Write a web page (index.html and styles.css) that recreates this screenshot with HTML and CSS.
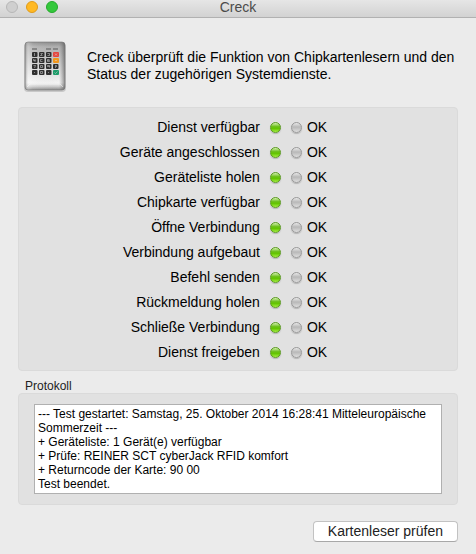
FILE: index.html
```html
<!DOCTYPE html>
<html lang="de">
<head>
    <meta charset="UTF-8">
    <meta name="viewport" content="width=device-width, initial-scale=1.0">
    <title>Creck</title>
    <link rel="stylesheet" href="styles.css">
</head>
<body>
    <header class="titlebar">
        <div class="lights">
            <span class="light"></span>
            <span class="light yellow"></span>
            <span class="light green"></span>
        </div>
        <h1 class="title">Creck</h1>
    </header>

    <main>
        <div class="intro">
            <svg class="reader" viewBox="0 0 46 52" width="46" height="52">
                <defs>
                    <linearGradient id="metal" x1="0" y1="0" x2="0" y2="1">
                        <stop offset="0" stop-color="#8c8c8c"/>
                        <stop offset="0.1" stop-color="#b0b0b0"/>
                        <stop offset="0.5" stop-color="#d6d6d6"/>
                        <stop offset="0.85" stop-color="#f4f4f4"/>
                        <stop offset="0.92" stop-color="#d4d4d4"/>
                        <stop offset="1" stop-color="#8a8a8a"/>
                    </linearGradient>
                    <linearGradient id="side" x1="0" y1="0" x2="1" y2="0">
                        <stop offset="0" stop-color="#777" stop-opacity="0.6"/>
                        <stop offset="0.08" stop-color="#fff" stop-opacity="0.3"/>
                        <stop offset="0.2" stop-color="#fff" stop-opacity="0.1"/>
                        <stop offset="0.85" stop-color="#777" stop-opacity="0"/>
                        <stop offset="1" stop-color="#444" stop-opacity="0.6"/>
                    </linearGradient>
                </defs>
                <rect x="2" y="3" width="42" height="49" rx="4" fill="#000" opacity="0.15"/>
                <rect x="3" y="2" width="40" height="48" rx="3" fill="url(#metal)"/>
                <rect x="3" y="2" width="40" height="48" rx="3" fill="url(#side)" stroke="#777" stroke-width="0.6"/>
                <path d="M5 47l3-3h30l3 3" fill="none" stroke="#fff" stroke-width="0.8" opacity="0.6"/>
                <!-- slot labels -->
                <path d="M10 9h5M24 9h5M31 9h5" stroke="#777" stroke-width="1.5"/>
                <!-- keys -->
                <g fill="#303030">
                    <rect x="10" y="12" width="5.500" height="5" rx="1"/>
                    <rect x="17" y="12" width="5.500" height="5" rx="1"/>
                    <rect x="24" y="12" width="5.500" height="5" rx="1"/>
                    <rect x="31" y="12" width="6" height="5" rx="1" fill="#e4453e"/>
                    <rect x="10" y="18" width="5.500" height="5" rx="1"/>
                    <rect x="17" y="18" width="5.500" height="5" rx="1"/>
                    <rect x="24" y="18" width="5.500" height="5" rx="1"/>
                    <rect x="31" y="18" width="6" height="5" rx="1" fill="#f2971e"/>
                    <rect x="10" y="24" width="5.500" height="5" rx="1"/>
                    <rect x="17" y="24" width="5.500" height="5" rx="1"/>
                    <rect x="24" y="24" width="5.500" height="5" rx="1"/>
                    <rect x="31" y="24" width="5.500" height="5" rx="1"/>
                    <rect x="10" y="30" width="5.500" height="5" rx="1"/>
                    <rect x="17" y="30" width="5.500" height="5" rx="1"/>
                    <rect x="24" y="30" width="5.500" height="5" rx="1"/>
                    <rect x="31" y="30" width="6" height="5" rx="1" fill="#1f9d6b"/>
                </g>
                <g fill="none" stroke="#ddd" stroke-width="0.5" transform="translate(0 1)">
                    <path d="M12.500 12v3M18.500 12.500h2l-2 2h2M25.500 12.500h2v2h-2M33 12.500l2 2m0-2l-2 2"/>
                    <path d="M11.500 18v1.500h2M13 18v3M20.500 18.500h-2v2h2M27.500 18.500h-2v2h2v-1h-2M33 19.500h2"/>
                    <path d="M11.500 24.500h2l-1 2.500M18.500 24.500h2v2h-2zM27.500 26.500v-2h-2v1h2M33 24.500h1.500v1h-1v1.500"/>
                    <path d="M12 31.500h1M18.500 30.500h2v2h-2zM26 31.500h1M32.500 31.500l1 1 2-2"/>
                </g>
            </svg>
            <p>Creck überprüft die Funktion von Chipkartenlesern und den Status der zugehörigen Systemdienste.</p>
        </div>

        <ul class="panel checks">
            <li><span class="name">Dienst verfügbar</span><i class="led on"></i><i class="led"></i><span>OK</span></li>
            <li><span class="name">Geräte angeschlossen</span><i class="led on"></i><i class="led"></i><span>OK</span></li>
            <li><span class="name">Geräteliste holen</span><i class="led on"></i><i class="led"></i><span>OK</span></li>
            <li><span class="name">Chipkarte verfügbar</span><i class="led on"></i><i class="led"></i><span>OK</span></li>
            <li><span class="name">Öffne Verbindung</span><i class="led on"></i><i class="led"></i><span>OK</span></li>
            <li><span class="name">Verbindung aufgebaut</span><i class="led on"></i><i class="led"></i><span>OK</span></li>
            <li><span class="name">Befehl senden</span><i class="led on"></i><i class="led"></i><span>OK</span></li>
            <li><span class="name">Rückmeldung holen</span><i class="led on"></i><i class="led"></i><span>OK</span></li>
            <li><span class="name">Schließe Verbindung</span><i class="led on"></i><i class="led"></i><span>OK</span></li>
            <li><span class="name">Dienst freigeben</span><i class="led on"></i><i class="led"></i><span>OK</span></li>
        </ul>

        <label class="log-label" for="log">Protokoll</label>
        <div class="panel log-panel">
            <textarea id="log" class="log" rows="6" readonly>--- Test gestartet: Samstag, 25. Oktober 2014 16:28:41 Mitteleuropäische Sommerzeit ---
+ Geräteliste: 1 Gerät(e) verfügbar
+ Prüfe: REINER SCT cyberJack RFID komfort
+ Returncode der Karte: 90 00
Test beendet.</textarea>
        </div>

        <div class="actions">
            <button class="check-btn" type="button">Kartenleser prüfen</button>
        </div>
    </main>
</body>
</html>
```

FILE: styles.css
```css
*{
    margin: 0;
    padding: 0;
    box-sizing: border-box;
}
body{
    background-color: #ebebeb;
    color: #000;
    font-family: "Liberation Sans", Arial, sans-serif;
    font-size: 14px;
    line-height: 17px;
}
.titlebar{
    display: grid;
    grid-template-columns: 1fr auto 1fr;
    height: 18px;
    background: linear-gradient(#e6e6e6, #d2d2d2);
    border-bottom: 1px solid #b1b1b1;
}
.lights{
    display: flex;
    gap: 8px;
    padding: 1px 0 0 6px;
}
.light{
    width: 12px;
    height: 12px;
    border-radius: 50%;
    background-color: #cfcfcf;
    border: 1px solid #b7b7b7;
}
.light.yellow{
    background-color: #ffb924;
    border-color: #e09b1a;
}
.light.green{
    background-color: #34c83c;
    border-color: #25a92c;
}
.title{
    font-size: 14px;
    font-weight: normal;
    line-height: 15px;
    color: #4b4b4b;
}
main{
    padding: 22px 18px 12px;
}
.intro{
    display: flex;
    align-items: flex-start;
    gap: 19px;
    padding-left: 4px;
}
.reader{
    flex: none;
}
.intro p{
    padding-top: 9px;
}
.panel{
    background-color: #e1e1e1;
    border: 1px solid #dadada;
    border-radius: 4px;
}
.checks{
    list-style: none;
    margin-top: 15px;
    padding: 7px 0 5px;
}
.checks li{
    display: grid;
    grid-template-columns: 55% 11px 11px auto;
    column-gap: 10px;
    align-items: center;
    justify-content: start;
    height: 25px;
}
.name{
    text-align: right;
}
.led{
    width: 11px;
    height: 11px;
    border-radius: 50%;
    border: 1px solid #999;
    background: linear-gradient(#e8e8e8, #b8b8b8 45%, #dedede);
    box-shadow: 0 1px 1px #b4b4b4;
}
.led + span{
    margin-left: -5px;
}
.led.on{
    border-color: #5a9a1e;
    background: linear-gradient(#d4f0b0, #6cc01c 40%, #62c400 60%, #a4f040);
}
.log-label{
    display: block;
    margin-top: 8px;
    padding-left: 7px;
    font-size: 12px;
    line-height: 14px;
    color: #222;
}
.log-panel{
    padding: 10px 15px;
}
.log{
    display: block;
    width: 100%;
    padding: 2px 3px;
    border: 1px solid #b0b0b0;
    background-color: #fff;
    color: #000;
    font: 12px/14px "Liberation Sans", Arial, sans-serif;
    resize: none;
    overflow: hidden;
    outline: none;
}
.actions{
    display: flex;
    justify-content: flex-end;
    margin-top: 16px;
}
.check-btn{
    height: 21px;
    padding: 0 14px;
    border: 1px solid #c2c2c2;
    border-bottom-color: #a8a8a8;
    border-radius: 4px;
    background-color: #fff;
    color: #222;
    font: 14px/17px "Liberation Sans", Arial, sans-serif;
}
```
